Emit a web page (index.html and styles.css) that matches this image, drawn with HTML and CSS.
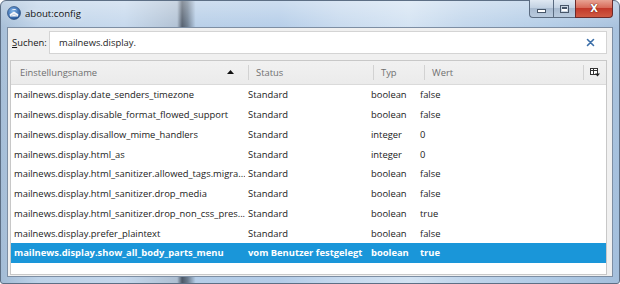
FILE: index.html
```html
<!DOCTYPE html>
<html lang="de">
<head>
<meta charset="utf-8">
<title>about:config</title>
<link rel="stylesheet" href="styles.css">
</head>
<body>
<div class="window">
  <div class="titlebar">
    <div class="tb-left">
      <svg class="app-icon" width="14" height="14" viewBox="0 0 14 14">
        <defs>
          <radialGradient id="g1" cx="40%" cy="35%" r="70%">
            <stop offset="0" stop-color="#7fb3e8"/>
            <stop offset="1" stop-color="#1f4f94"/>
          </radialGradient>
        </defs>
        <circle cx="7" cy="7" r="6.5" fill="url(#g1)" stroke="#1d3f70" stroke-width="0.6"/>
        <path d="M2.6 8.2 L7 5.6 L11.4 8.2 L11 10.6 L3 10.6 Z" fill="#f4f6fa"/>
        <path d="M3 10.6 L7 8 L11 10.6" fill="none" stroke="#9fb4cf" stroke-width="0.6"/>
        <path d="M4.4 4.2 C6 2.6 8.6 2.8 9.8 4.4 C8.6 3.8 6.4 3.8 4.4 4.2 Z" fill="#e8eef7"/>
      </svg>
      <span class="title">about:config</span>
    </div>
    <div class="controls">
      <div class="btn btn-min"><span class="min-glyph"></span></div>
      <div class="btn btn-max"><span class="max-glyph"></span></div>
      <div class="btn btn-close"><span class="close-glyph">X</span></div>
    </div>
  </div>
  <div class="client">
    <div class="search-row">
      <label class="search-label"><u>S</u>uchen:</label>
      <div class="search-box">
        <span class="search-text">mailnews.display.</span>
        <svg class="clear-icon" width="9" height="9" viewBox="0 0 9 9">
          <path d="M1.5 1.5 L7.5 7.5 M7.5 1.5 L1.5 7.5" stroke="#3b6ea8" stroke-width="1.6" stroke-linecap="round"/>
        </svg>
      </div>
    </div>
    <div class="tree">
      <div class="tree-head">
        <div class="hcell hname">Einstellungsname
          <svg class="sort-arrow" width="7" height="4" viewBox="0 0 7 4"><path d="M0 4 L3.5 0 L7 4 Z" fill="#111"/></svg>
        </div>
        <div class="hcell hsep">Status</div>
        <div class="hcell hsep">Typ</div>
        <div class="hcell hsep">Wert</div>
        <div class="hcell hsep hpick">
          <svg width="10" height="9" viewBox="0 0 10 9">
            <rect x="0.5" y="0.5" width="7" height="6" fill="#fff" stroke="#333"/>
            <path d="M0.5 2.5 H7.5 M3.5 0.5 V6.5" stroke="#333"/>
            <path d="M5 5.5 H10 L7.5 8.5 Z" fill="#222"/>
          </svg>
        </div>
      </div>
      <div class="tree-body">
        <div class="row"><span class="c">mailnews.display.date_senders_timezone</span><span class="c">Standard</span><span class="c">boolean</span><span class="c">false</span></div>
        <div class="row"><span class="c">mailnews.display.disable_format_flowed_support</span><span class="c">Standard</span><span class="c">boolean</span><span class="c">false</span></div>
        <div class="row"><span class="c">mailnews.display.disallow_mime_handlers</span><span class="c">Standard</span><span class="c">integer</span><span class="c">0</span></div>
        <div class="row"><span class="c">mailnews.display.html_as</span><span class="c">Standard</span><span class="c">integer</span><span class="c">0</span></div>
        <div class="row"><span class="c">mailnews.display.html_sanitizer.allowed_tags.migra...</span><span class="c">Standard</span><span class="c">boolean</span><span class="c">false</span></div>
        <div class="row"><span class="c">mailnews.display.html_sanitizer.drop_media</span><span class="c">Standard</span><span class="c">boolean</span><span class="c">false</span></div>
        <div class="row"><span class="c">mailnews.display.html_sanitizer.drop_non_css_pres...</span><span class="c">Standard</span><span class="c">boolean</span><span class="c">true</span></div>
        <div class="row"><span class="c">mailnews.display.prefer_plaintext</span><span class="c">Standard</span><span class="c">boolean</span><span class="c">false</span></div>
        <div class="row selected"><span class="c">mailnews.display.show_all_body_parts_menu</span><span class="c">vom Benutzer festgelegt</span><span class="c">boolean</span><span class="c">true</span></div>
      </div>
    </div>
  </div>
</div>
</body>
</html>
```

FILE: styles.css
```css
* { box-sizing: border-box; }
html, body { margin: 0; padding: 0; }
body {
  width: 620px;
  height: 284px;
  overflow: hidden;
  font-family: "Open Sans", "Noto Sans", sans-serif;
  font-size: 9.4px;
  color: #222;
  background: #fff;
}
.window {
  width: 620px;
  height: 284px;
  display: flex;
  flex-direction: column;
  border: 1px solid #5d6f85;
  border-radius: 6px 6px 3px 3px;
  background:
    linear-gradient(180deg, rgba(255,255,255,0.35) 0px, rgba(255,255,255,0.05) 26px, rgba(255,255,255,0) 100%),
    linear-gradient(90deg, #a3bcd6 0%, #bdd2e8 6%, #c4d7ec 20%, #aebfd2 28.5%, #4c5867 29.3%, #6a7b8e 30.2%, #b5cde7 31.5%, #b3cce8 45%, #c6d9ee 55%, #d2e2f2 66%, #c0d5eb 75%, #b1cbe6 88%, #a4bfdc 100%);
}
.titlebar {
  height: 26px;
  display: flex;
  align-items: flex-start;
}
.tb-left {
  display: flex;
  align-items: center;
  gap: 4px;
  padding-left: 6px;
  height: 24px;
}
.app-icon { display: block; }
.title {
  font-size: 9.6px;
  color: #111;
  text-shadow: 0 0 6px rgba(255,255,255,0.9);
}
.controls {
  margin-left: auto;
  margin-right: 6px;
  display: flex;
  margin-top: -1px;
}
.btn {
  height: 18px;
  display: flex;
  align-items: center;
  justify-content: center;
  border: 1px solid #5a6b80;
  border-top: none;
  background: linear-gradient(180deg, #dfe8f2 0%, #c3d2e3 45%, #a9bbd0 50%, #b9cadd 100%);
}
.btn-min { width: 24px; border-radius: 0 0 0 4px; border-right: none; }
.btn-max { width: 22px; border-right: none; }
.btn-close {
  width: 38px;
  border-radius: 0 0 4px 0;
  border-color: #6b2a2a;
  background: linear-gradient(180deg, #e8a393 0%, #d86b5a 45%, #c2392a 50%, #cf5a43 100%);
}
.min-glyph {
  width: 9px;
  height: 4px;
  margin-top: 4px;
  background: #fff;
  border: 1px solid #475669;
}
.max-glyph {
  width: 9px;
  height: 8px;
  border: 1px solid #475669;
  background: #fff;
  box-shadow: inset 0 0 0 1px #c9d5e2, inset 0 2px 0 1px #475669;
}
.close-glyph {
  font-family: "DejaVu Sans", sans-serif;
  font-weight: bold;
  font-size: 10px;
  color: #fff;
  text-shadow: 0 0 1px #5a1a12, 0 0 1px #5a1a12;
  line-height: 1;
}
.client {
  flex: 1;
  margin: 0 6px 6px 6px;
  border: 1px solid #7d8ea3;
  background: #f0f0f0;
  padding: 3px 5px 1px 2px;
  display: flex;
  flex-direction: column;
  gap: 6px;
}
.search-row {
  display: flex;
  align-items: center;
  height: 23px;
}
.search-label {
  width: 39px;
  padding-left: 2px;
  color: #1a1a1a;
}
.search-label u { text-decoration: underline; }
.search-box {
  flex: 1;
  height: 23px;
  background: #fff;
  border: 1px solid #d4d4d4;
  display: flex;
  align-items: center;
  padding-left: 9px;
  padding-right: 11px;
}
.search-text { flex: 1; color: #1e1e1e; }
.clear-icon { display: block; }
.tree {
  flex: 1;
  border: 1px solid #c8c8c8;
  background: #fff;
  display: flex;
  flex-direction: column;
}
.tree-head {
  height: 24px;
  display: grid;
  grid-template-columns: 237px 125px 51px 159px 1fr;
  background: linear-gradient(180deg, #f1f1f1, #ebebeb);
  border-bottom: 1px solid #dadada;
  color: #707070;
}
.hcell {
  display: flex;
  align-items: center;
  padding-left: 8px;
  position: relative;
}
.hname { padding-left: 9px; }
.hsep::before {
  content: "";
  position: absolute;
  left: 0;
  top: 4px;
  bottom: 4px;
  width: 1px;
  background: #d2d2d2;
}
.sort-arrow {
  position: absolute;
  right: 14px;
  top: 9px;
}
.hpick { justify-content: center; padding-left: 0; }
.hpick svg { display: block; }
.tree-body {
  flex: 1;
}
.row {
  height: 19.75px;
  display: grid;
  grid-template-columns: 234px 123px 49px 1fr;
  align-items: center;
}
.c {
  padding-left: 3px;
  white-space: nowrap;
  overflow: hidden;
}
.row.selected {
  background: #1a96d9;
  color: #fff;
  font-weight: bold;
}
```
